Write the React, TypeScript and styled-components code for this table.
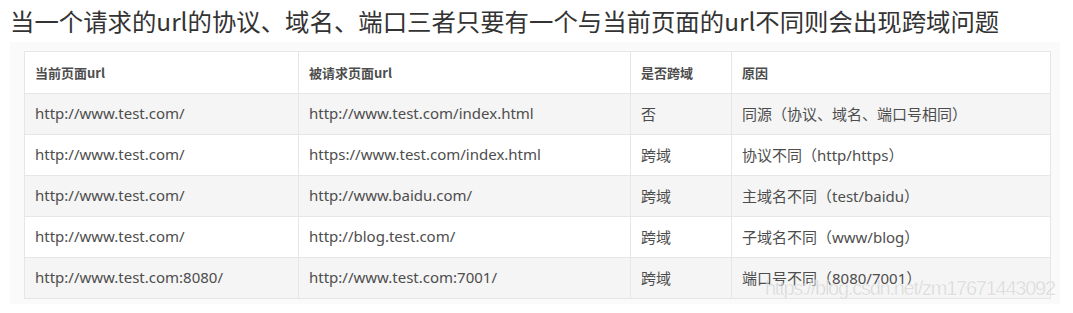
import styled, { createGlobalStyle } from "styled-components";

const GlobalStyle = createGlobalStyle`
  body {
    margin: 0;
    background: #ffffff;
    font-family: "Noto Sans", "Noto Sans CJK SC", sans-serif;
  }
`;

const Page = styled.div`
  position: relative;
  width: 1073px;
  height: 313px;
  overflow: hidden;
  background: #ffffff;
`;

const Title = styled.h2`
  margin: 0;
  padding: 5px 0 0 10px;
  height: 37px;
  box-sizing: border-box;
  font-family: "Noto Sans CJK SC", sans-serif;
  font-size: 24.4px;
  font-weight: 400;
  line-height: 32px;
  color: #333333;
  white-space: nowrap;
`;

const Panel = styled.div`
  width: 1050px;
  box-sizing: border-box;
  margin: 5px 0 0 10px;
  padding: 9px 10px 5px 14px;
  background: #fafafa;
`;

const Table = styled.table`
  width: 1026px;
  border-collapse: collapse;
  table-layout: fixed;
  font-size: 15px;
  color: #4d4d4d;
`;

const HeadCell = styled.th<{ $w: number }>`
  width: ${(p) => p.$w}px;
  box-sizing: border-box;
  height: 42px;
  padding: 0 10px;
  border: 1px solid #e6e6e6;
  background: #ffffff;
  text-align: left;
  font-family: "Noto Sans CJK SC", sans-serif;
  font-size: 13px;
  font-weight: 700;
  color: #4d4d4d;
`;

const Row = styled.tr<{ $odd: boolean }>`
  background: ${(p) => (p.$odd ? "#f5f5f5" : "#ffffff")};
`;

const Cell = styled.td`
  height: 41px;
  box-sizing: border-box;
  padding: 0 10px 2px;
  border: 1px solid #e6e6e6;
  white-space: nowrap;
  overflow: hidden;
`;

const Watermark = styled.div`
  position: absolute;
  left: 765px;
  top: 277px;
  font-family: "Liberation Sans", sans-serif;
  font-size: 20px;
  letter-spacing: -1.25px;
  color: rgba(195, 195, 195, 0.6);
  -webkit-text-stroke: 0.5px rgba(255, 255, 255, 0.7);
  white-space: nowrap;
`;

const columns = [
  { label: "当前页面url", w: 274 },
  { label: "被请求页面url", w: 332 },
  { label: "是否跨域", w: 101 },
  { label: "原因", w: 319 },
];

const rows = [
  ["http://www.test.com/", "http://www.test.com/index.html", "否", "同源（协议、域名、端口号相同）"],
  ["http://www.test.com/", "https://www.test.com/index.html", "跨域", "协议不同（http/https）"],
  ["http://www.test.com/", "http://www.baidu.com/", "跨域", "主域名不同（test/baidu）"],
  ["http://www.test.com/", "http://blog.test.com/", "跨域", "子域名不同（www/blog）"],
  ["http://www.test.com:8080/", "http://www.test.com:7001/", "跨域", "端口号不同（8080/7001）"],
];

export default function App() {
  return (
    <Page>
      <GlobalStyle />
      <Title>当一个请求的url的协议、域名、端口三者只要有一个与当前页面的url不同则会出现跨域问题</Title>
      <Panel>
        <Table>
          <thead>
            <tr>
              {columns.map((c) => (
                <HeadCell key={c.label} $w={c.w}>
                  {c.label}
                </HeadCell>
              ))}
            </tr>
          </thead>
          <tbody>
            {rows.map((r, i) => (
              <Row key={i} $odd={i % 2 === 0}>
                {r.map((v, j) => (
                  <Cell key={j}>{v}</Cell>
                ))}
              </Row>
            ))}
          </tbody>
        </Table>
      </Panel>
      <Watermark>https://blog.csdn.net/zm17671443092</Watermark>
    </Page>
  );
}
